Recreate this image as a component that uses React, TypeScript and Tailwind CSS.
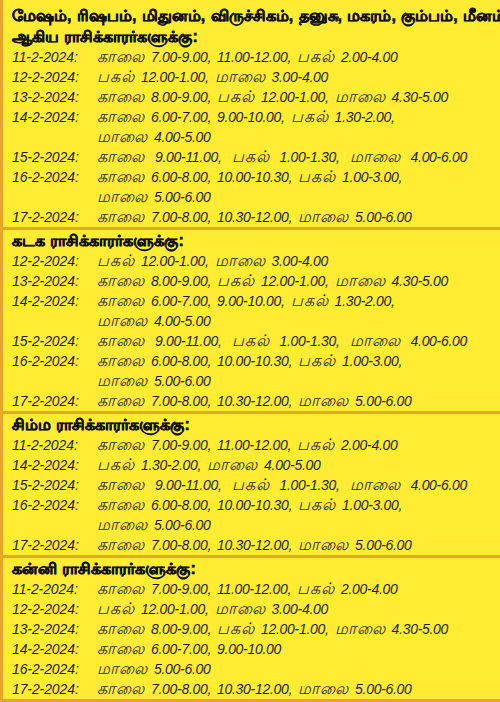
import React from "react";

type Row = { d: string; t: string[]; wide?: boolean };

const r11: Row = { d: "11-2-2024:", t: ["காலை 7.00-9.00, 11.00-12.00, பகல் 2.00-4.00"] };
const r12: Row = { d: "12-2-2024:", t: ["பகல் 12.00-1.00, மாலை 3.00-4.00"] };
const r13: Row = { d: "13-2-2024:", t: ["காலை 8.00-9.00, பகல் 12.00-1.00, மாலை 4.30-5.00"] };
const r14: Row = { d: "14-2-2024:", t: ["காலை 6.00-7.00, 9.00-10.00, பகல் 1.30-2.00,", "மாலை 4.00-5.00"] };
const r15: Row = { d: "15-2-2024:", t: ["காலை 9.00-11.00, பகல் 1.00-1.30, மாலை 4.00-6.00"], wide: true };
const r16: Row = { d: "16-2-2024:", t: ["காலை 6.00-8.00, 10.00-10.30, பகல் 1.00-3.00,", "மாலை 5.00-6.00"] };
const r17: Row = { d: "17-2-2024:", t: ["காலை 7.00-8.00, 10.30-12.00, மாலை 5.00-6.00"] };

const sections: { title: string[]; rows: Row[] }[] = [
  {
    title: [
      "மேஷம், ரிஷபம், மிதுனம், விருச்சிகம், தனுசு, மகரம், கும்பம், மீனம்",
      "ஆகிய ராசிக்காரர்களுக்கு:",
    ],
    rows: [r11, r12, r13, r14, r15, r16, r17],
  },
  { title: ["கடக ராசிக்காரர்களுக்கு:"], rows: [r12, r13, r14, r15, r16, r17] },
  {
    title: ["சிம்ம ராசிக்காரர்களுக்கு:"],
    rows: [r11, { d: "14-2-2024:", t: ["பகல் 1.30-2.00, மாலை 4.00-5.00"] }, r15, r16, r17],
  },
  {
    title: ["கன்னி ராசிக்காரர்களுக்கு:"],
    rows: [
      r11,
      r12,
      r13,
      { d: "14-2-2024:", t: ["காலை 6.00-7.00, 9.00-10.00"] },
      { d: "16-2-2024:", t: ["மாலை 5.00-6.00"] },
      r17,
    ],
  },
];

function Line({ text, wide }: { text: string; wide?: boolean }) {
  const tokens = text.split(" ");
  return (
    <div className={`h-[20px] flex items-center ${wide ? "gap-[10px]" : "gap-[6px]"}`}>
      {tokens.map((tk, i) =>
        /[\u0B80-\u0BFF]/.test(tk) ? (
          <span key={i} className="text-[16px] tracking-[1px] text-[#2a2a2a]">
            {tk}
          </span>
        ) : (
          <span key={i} className="tracking-[-0.3px]">
            {tk}
          </span>
        )
      )}
    </div>
  );
}

export default function App() {
  return (
    <div className="w-[500px] h-[702px] bg-white overflow-hidden">
      <div className="bg-[#ffec33] border-l-[3px] border-[#e8a52c] text-[#1e1e1e]">
        {sections.map((s, i) => (
          <div
            key={i}
            className={`border-b-[3px] border-[#e8a52c] pl-[9px] ${i === 0 ? "pt-[5px]" : ""}`}
          >
            {s.title.map((t, j) => (
              <div
                key={j}
                className="h-[21px] flex items-center whitespace-nowrap font-bold text-[16px] [word-spacing:1px] [-webkit-text-stroke:0.6px_#111] text-[#111] font-['Liberation_Sans',sans-serif]"
              >
                {t}
              </div>
            ))}
            {s.rows.map((r, k) => (
              <div
                key={k}
                className="grid grid-cols-[85px_1fr] italic text-[14px] font-['Liberation_Sans',sans-serif] whitespace-nowrap"
              >
                <div className="h-[20px] flex items-center tracking-[-0.1px]">{r.d}</div>
                <div>
                  {r.t.map((line, m) => (
                    <Line key={m} text={line} wide={r.wide && m === 0} />
                  ))}
                </div>
              </div>
            ))}
          </div>
        ))}
      </div>
    </div>
  );
}
